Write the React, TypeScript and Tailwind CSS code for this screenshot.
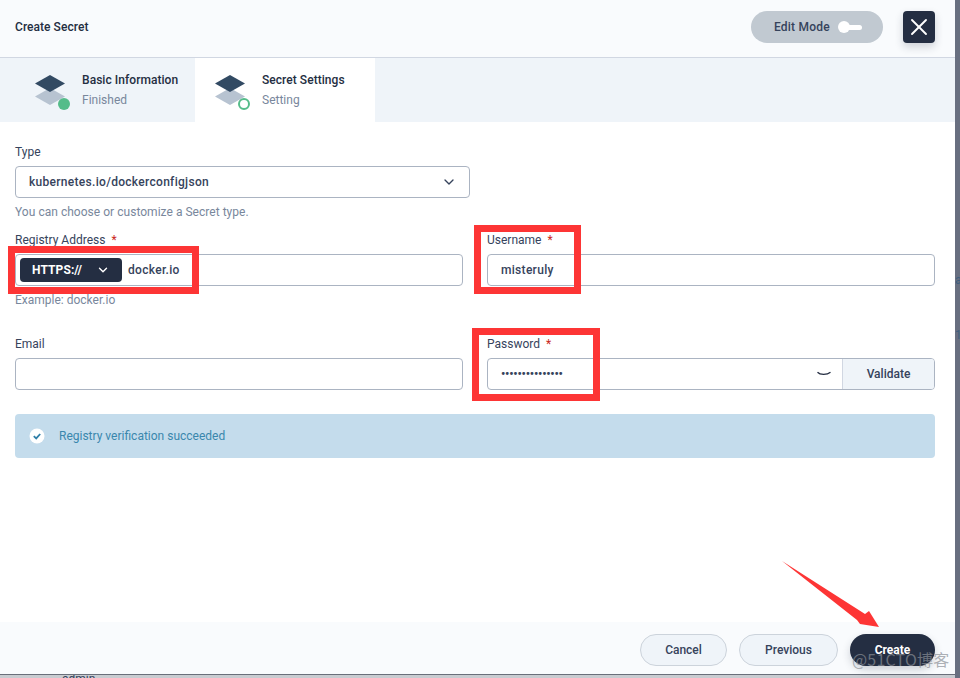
import { ChevronDown, X } from "lucide-react";

function LayersIcon({ filled }: { filled: boolean }) {
  return (
    <div className="relative w-[32px] h-[32px] shrink-0">
      <svg width="32" height="32" viewBox="0 0 32 32">
        <polygon points="15,14 30,22.5 15,31 0,22.5" fill="#b7c3d1" />
        <polygon points="15,1 30,9.5 15,18 0,9.5" fill="#324a63" />
      </svg>
      {filled ? (
        <div className="absolute left-[23px] top-[24px] w-[12px] h-[12px] rounded-full bg-[#55bc8a]" />
      ) : (
        <div className="absolute left-[23px] top-[24px] w-[12px] h-[12px] rounded-full bg-white border-2 border-[#55bc8a]" />
      )}
    </div>
  );
}

function Step({ title, sub, active }: { title: string; sub: string; active: boolean }) {
  return (
    <div className={`w-[180px] h-[64px] flex items-start pl-[20px] pt-[14px] gap-[15px] ${active ? "bg-white" : ""}`}>
      <div className="pt-[2px]">
        <LayersIcon filled={!active} />
      </div>
      <div>
        <div className="text-[12px] leading-[16px] font-medium text-[#242e42] whitespace-nowrap tracking-[0.05px]">{title}</div>
        <div className="text-[12px] leading-[16px] mt-[4px] text-[#79879c]">{sub}</div>
      </div>
    </div>
  );
}

function Label({ text, required }: { text: string; required?: boolean }) {
  return (
    <div className="h-[14px] mb-[7px] text-[12px] leading-[14px] text-[#36435c] whitespace-nowrap">
      {text}
      {required && <span className="text-[#ca2621] ml-[6px]">*</span>}
    </div>
  );
}

function Field({ children }: { children?: React.ReactNode }) {
  return (
    <div className="h-[32px] flex items-center rounded-[4px] border border-[#abb4c2] bg-white text-[12px] font-medium text-[#36435c] overflow-hidden">
      {children}
    </div>
  );
}

function RedBox({ className }: { className: string }) {
  return <div className={`absolute border-[7px] border-[#fd3535] ${className}`} />;
}

export default function App() {
  return (
    <div className="relative w-[960px] h-[678px] overflow-hidden bg-[#c9ccd1] font-['Roboto',sans-serif]">
      {/* page behind the modal */}
      <div className="absolute right-0 top-0 bottom-0 w-[5px] bg-[#686f80]" />
      <div className="absolute left-[955px] top-[273px] text-[12px] leading-[14px] text-[#3f5f7f]">a</div>
      <div className="absolute left-[955px] top-[328px] text-[12px] leading-[14px] text-[#3f5f7f]">1</div>
      <div className="absolute left-[62px] top-[672px] text-[12px] leading-[14px] text-[#36435c]">admin</div>

      <div className="relative w-[955px] h-[675px] bg-white border-b border-[#6a6f7a] flex flex-col">
        <div className="h-[58px] shrink-0 bg-[#f9fbfd] border-b border-[#d1d7e2] flex items-center justify-between pl-[15px] pr-[20px] pb-[3px]">
          <div className="text-[12px] font-medium text-[#242e42] tracking-[0.05px]">Create Secret</div>
          <div className="flex items-center gap-[20px]">
            <div className="w-[132px] h-[32px] rounded-full bg-[#c1c9d1] flex items-center pl-[23px] gap-[8px]">
              <span className="text-[12px] font-medium text-[#36435c] tracking-[0.2px]">Edit Mode</span>
              <div className="relative w-[24px] h-[12px]">
                <div className="absolute left-[4px] top-[4px] w-[20px] h-[5px] rounded-full bg-white" />
                <div className="absolute left-0 top-0 w-[12px] h-[12px] rounded-full bg-white" />
              </div>
            </div>
            <div className="w-[32px] h-[32px] rounded-[4px] bg-[#242e42] flex items-center justify-center shadow-[0_4px_8px_0_rgba(36,46,66,0.2)]">
              <X size={28} color="#ffffff" strokeWidth={1.6} />
            </div>
          </div>
        </div>

        <div className="h-[64px] shrink-0 bg-[#eff4f9] flex pl-[15px]">
          <Step title="Basic Information" sub="Finished" active={false} />
          <Step title="Secret Settings" sub="Setting" active={true} />
        </div>

        <div className="flex-1 px-[15px] pt-[23px] relative">
          <Label text="Type" />
          <div className="w-[455px]">
            <Field>
              <span className="pl-[13px] flex-1 tracking-[0.3px]">kubernetes.io/dockerconfigjson</span>
              <ChevronDown size={16} color="#36435c" className="mr-[12px]" />
            </Field>
          </div>
          <div className="mt-[7px] h-[14px] text-[12px] leading-[14px] text-[#79879c] tracking-[0.03px]">You can choose or customize a Secret type.</div>

          <div className="mt-[14px] grid grid-cols-2 gap-x-[24px] w-[920px]">
            <div className="h-[104px]">
              <Label text="Registry Address" required />
              <Field>
                <div className="ml-[4px] w-[102px] h-[24px] rounded-[4px] bg-[#242e42] flex items-center justify-between pl-[12px] pr-[12px] text-white font-bold">
                  <span className="tracking-[0.1px]">HTTPS://</span>
                  <ChevronDown size={14} color="#ffffff" strokeWidth={2.4} />
                </div>
                <span className="ml-[6px] tracking-[0.3px]">docker.io</span>
              </Field>
              <div className="mt-[7px] text-[12px] leading-[14px] text-[#79879c]">Example: docker.io</div>
            </div>
            <div className="h-[104px]">
              <Label text="Username" required />
              <Field>
                <span className="pl-[13px] tracking-[0.3px]">misteruly</span>
              </Field>
            </div>
            <div>
              <Label text="Email" />
              <Field />
            </div>
            <div>
              <Label text="Password" required />
              <Field>
                <span className="pl-[13px] flex-1 text-[12px] font-bold tracking-[-0.2px]">•••••••••••••••</span>
                <svg width="16" height="6" viewBox="0 0 16 6" className="mr-[10px]">
                  <path d="M1.5 1.2 C4 4 11 4 14.5 1.2" fill="none" stroke="#242e42" strokeWidth="1.3" />
                </svg>
                <div className="w-[92px] h-full bg-[#eff4f9] border-l border-[#d1d7e2] flex items-center justify-center">Validate</div>
              </Field>
            </div>
          </div>

          <div className="mt-[24px] w-[920px] h-[44px] rounded-[4px] bg-[#c4dcec] flex items-center pl-[14px] gap-[14px]">
            <svg width="16" height="16" viewBox="0 0 16 16">
              <circle cx="8" cy="8" r="7.5" fill="#ffffff" />
              <path d="M4.8 8.2 L7.2 10.4 L11.2 6" fill="none" stroke="#2f7fa8" strokeWidth="1.8" />
            </svg>
            <span className="text-[12px] text-[#3a87ad]">Registry verification succeeded</span>
          </div>
        </div>

        <div className="h-[52px] shrink-0 bg-[#f9fbfd] flex items-center justify-end gap-[12px] pr-[20px] pt-[4px]">
          <div className="w-[87px] h-[32px] rounded-full border border-[#ccd3db] bg-[#eff4f9] flex items-center justify-center text-[12px] font-medium text-[#36435c]">Cancel</div>
          <div className="w-[99px] h-[32px] rounded-full border border-[#ccd3db] bg-[#eff4f9] flex items-center justify-center text-[12px] font-medium text-[#36435c]">Previous</div>
          <div className="w-[85px] h-[32px] rounded-full bg-[#242e42] flex items-center justify-center text-[12px] font-bold text-white shadow-[0_4px_8px_0_rgba(36,46,66,0.2)]">Create</div>
        </div>
      </div>

      {/* screenshot annotations */}
      <RedBox className="left-[8px] top-[246px] w-[191px] h-[48px]" />
      <RedBox className="left-[474px] top-[225px] w-[107px] h-[69px]" />
      <RedBox className="left-[472px] top-[328px] w-[128px] h-[73px]" />
      <svg className="absolute left-[780px] top-[560px]" width="100" height="70" viewBox="0 0 100 70">
        <polygon points="2,1 85,54 89,51 99,67 80,64 77,60" fill="#fd3535" />
      </svg>
      <div className="absolute left-[852px] top-[649px] text-[16px] leading-[20px] text-[#8b8f96]/70 whitespace-nowrap tracking-[0.2px] font-['Noto_Sans_CJK_SC','Roboto',sans-serif]">@51CTO博客</div>
    </div>
  );
}
